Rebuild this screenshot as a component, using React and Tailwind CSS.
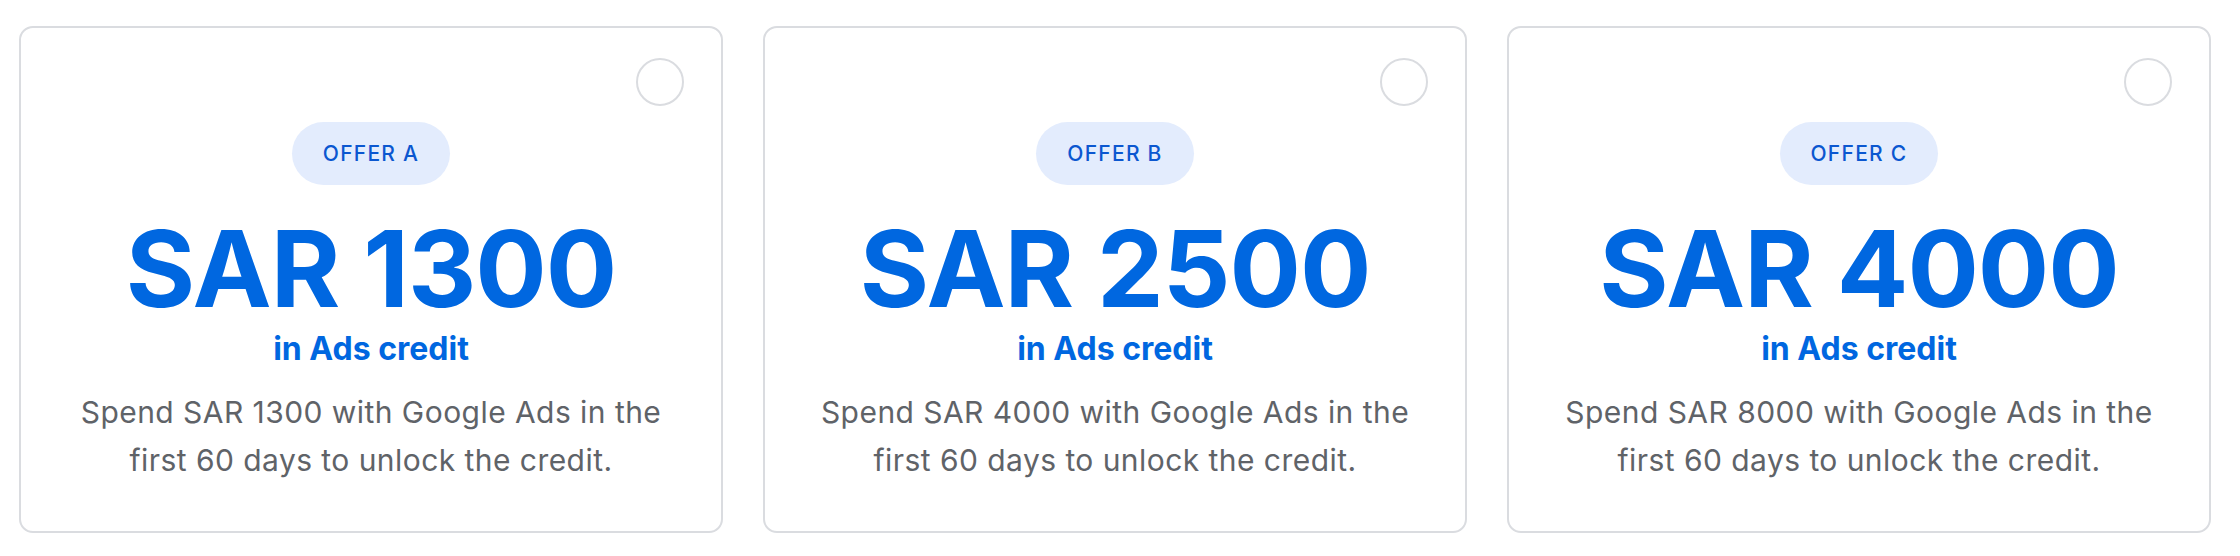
import React from "react";

const offers = [
  { label: "OFFER A", amount: "SAR 1300", spend: "SAR 1300" },
  { label: "OFFER B", amount: "SAR 2500", spend: "SAR 4000" },
  { label: "OFFER C", amount: "SAR 4000", spend: "SAR 8000" },
];

function Card({ o }) {
  return (
    <div className="relative flex h-[507px] w-[704px] shrink-0 flex-col items-center rounded-[14px] border-2 border-[#dadce0] bg-white pt-[94px]">
      <div className="absolute right-[37px] top-[30px] h-[48px] w-[48px] rounded-full border-2 border-[#dadce0]" />
      <div className="flex h-[63px] items-center rounded-full bg-[#e3ecfd] px-[31px] text-[21px] font-medium tracking-[0.06em] text-[#0b57d0]">
        {o.label}
      </div>
      <div className="mt-[30px] text-[106px] font-bold leading-[108px] tracking-[-0.01em] text-[#0067e0]">
        {o.amount}
      </div>
      <div className="mt-[6px] text-[32px] font-bold leading-[40px] text-[#0067e0]">
        in Ads credit
      </div>
      <div className="mt-[19px] text-center text-[30px] leading-[48px] tracking-[0.015em] text-[#5f6368]">
        Spend {o.spend} with Google Ads in the
        <br />
        first 60 days to unlock the credit.
      </div>
    </div>
  );
}

export default function App() {
  return (
    <div
      className="flex h-[556px] w-[2240px] gap-[40px] bg-white pl-[19px] pt-[26px]"
      style={{ fontFamily: "Inter, 'Noto Sans', sans-serif" }}
    >
      {offers.map((o) => (
        <Card key={o.label} o={o} />
      ))}
    </div>
  );
}
